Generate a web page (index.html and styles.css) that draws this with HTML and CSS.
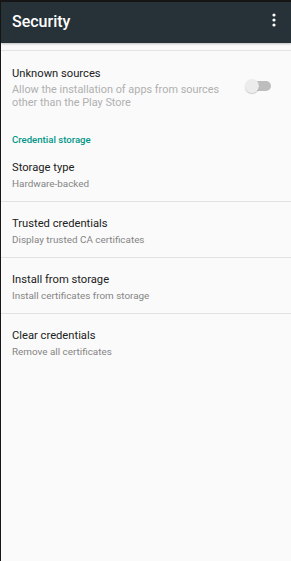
FILE: index.html
```html
<!DOCTYPE html>
<html>
<head>
    <meta charset="utf-8">
    <link rel="stylesheet" href="styles.css">
</head>
<body>
    <div class="screen">
        <div class="toolbar">
            <span class="toolbar-title">Security</span>
            <svg class="overflow" width="4" height="14" viewBox="0 0 4 14">
                <circle cx="2" cy="2" r="1.6" fill="#fff"/>
                <circle cx="2" cy="7" r="1.6" fill="#fff"/>
                <circle cx="2" cy="12" r="1.6" fill="#fff"/>
            </svg>
        </div>
        <div class="prefs">
            <div class="pref-gap"></div>
            <div class="pref pref-switch">
                <div class="pref-text">
                    <div class="pref-title">Unknown sources</div>
                    <div class="pref-summary">Allow the installation of apps from sources other than the Play Store</div>
                </div>
                <div class="switch">
                    <div class="switch-track"></div>
                    <div class="switch-thumb"></div>
                </div>
            </div>
            <div class="category">Credential storage</div>
            <div class="pref">
                <div class="pref-title">Storage type</div>
                <div class="pref-summary">Hardware-backed</div>
            </div>
            <div class="pref">
                <div class="pref-title">Trusted credentials</div>
                <div class="pref-summary">Display trusted CA certificates</div>
            </div>
            <div class="pref">
                <div class="pref-title">Install from storage</div>
                <div class="pref-summary">Install certificates from storage</div>
            </div>
            <div class="pref last">
                <div class="pref-title">Clear credentials</div>
                <div class="pref-summary">Remove all certificates</div>
            </div>
        </div>
    </div>
</body>
</html>
```

FILE: styles.css
```css
body {
    margin: 0;
    background-color: #161616;
    font-family: Roboto, "Noto Sans", sans-serif;
}

.screen {
    margin-top: 2px;
    margin-left: 1px;
    height: 559px;
    background-color: #fafafa;
    display: flex;
    flex-direction: column;
}

.toolbar {
    height: 41px;
    flex-shrink: 0;
    background-color: #263238;
    display: flex;
    align-items: center;
    justify-content: space-between;
    padding: 0 15px 0 11px;
    box-shadow: 0 1px 2px rgba(0, 0, 0, 0.25);
    position: relative;
    z-index: 1;
}
.toolbar-title {
    color: #ffffff;
    font-size: 16px;
    font-weight: 500;
    margin-top: -2px;
}
.overflow {
    display: block;
    margin-top: -5px;
}

.prefs {
    flex-grow: 1;
}

.pref-gap {
    height: 7px;
    border-bottom: 1px solid #e2e2e2;
}

.pref {
    padding: 15px 11px 0 11px;
    height: 40px;
    border-bottom: 1px solid #e2e2e2;
}
.pref.last {
    border-bottom: none;
}

.pref-switch {
    display: flex;
    align-items: center;
    height: auto;
    padding: 16px 20px 10px 11px;
    border-bottom: none;
}
.pref-text {
    flex-grow: 1;
}

.pref-title {
    font-size: 11.2px;
    color: #212121;
    line-height: 14px;
}
.pref-summary {
    font-size: 9.9px;
    color: #858585;
    line-height: 13px;
    margin-top: 2px;
}
.pref-switch .pref-summary {
    font-size: 10.9px;
    color: #b0b0b0;
    padding-right: 18px;
}

.switch {
    position: relative;
    width: 26px;
    height: 14px;
    flex-shrink: 0;
    margin-top: -4px;
}
.switch-track {
    position: absolute;
    left: 3px;
    right: 0;
    top: 2px;
    height: 10px;
    border-radius: 5px;
    background-color: #bdbdbd;
}
.switch-thumb {
    position: absolute;
    left: 0;
    top: 0;
    width: 14px;
    height: 14px;
    border-radius: 50%;
    background-color: #ececec;
    box-shadow: 0 1px 1px rgba(0, 0, 0, 0.2);
}

.category {
    padding: 15px 11px 0 11px;
    line-height: 12px;
    font-size: 9.6px;
    font-weight: 500;
    color: #009688;
}
```
